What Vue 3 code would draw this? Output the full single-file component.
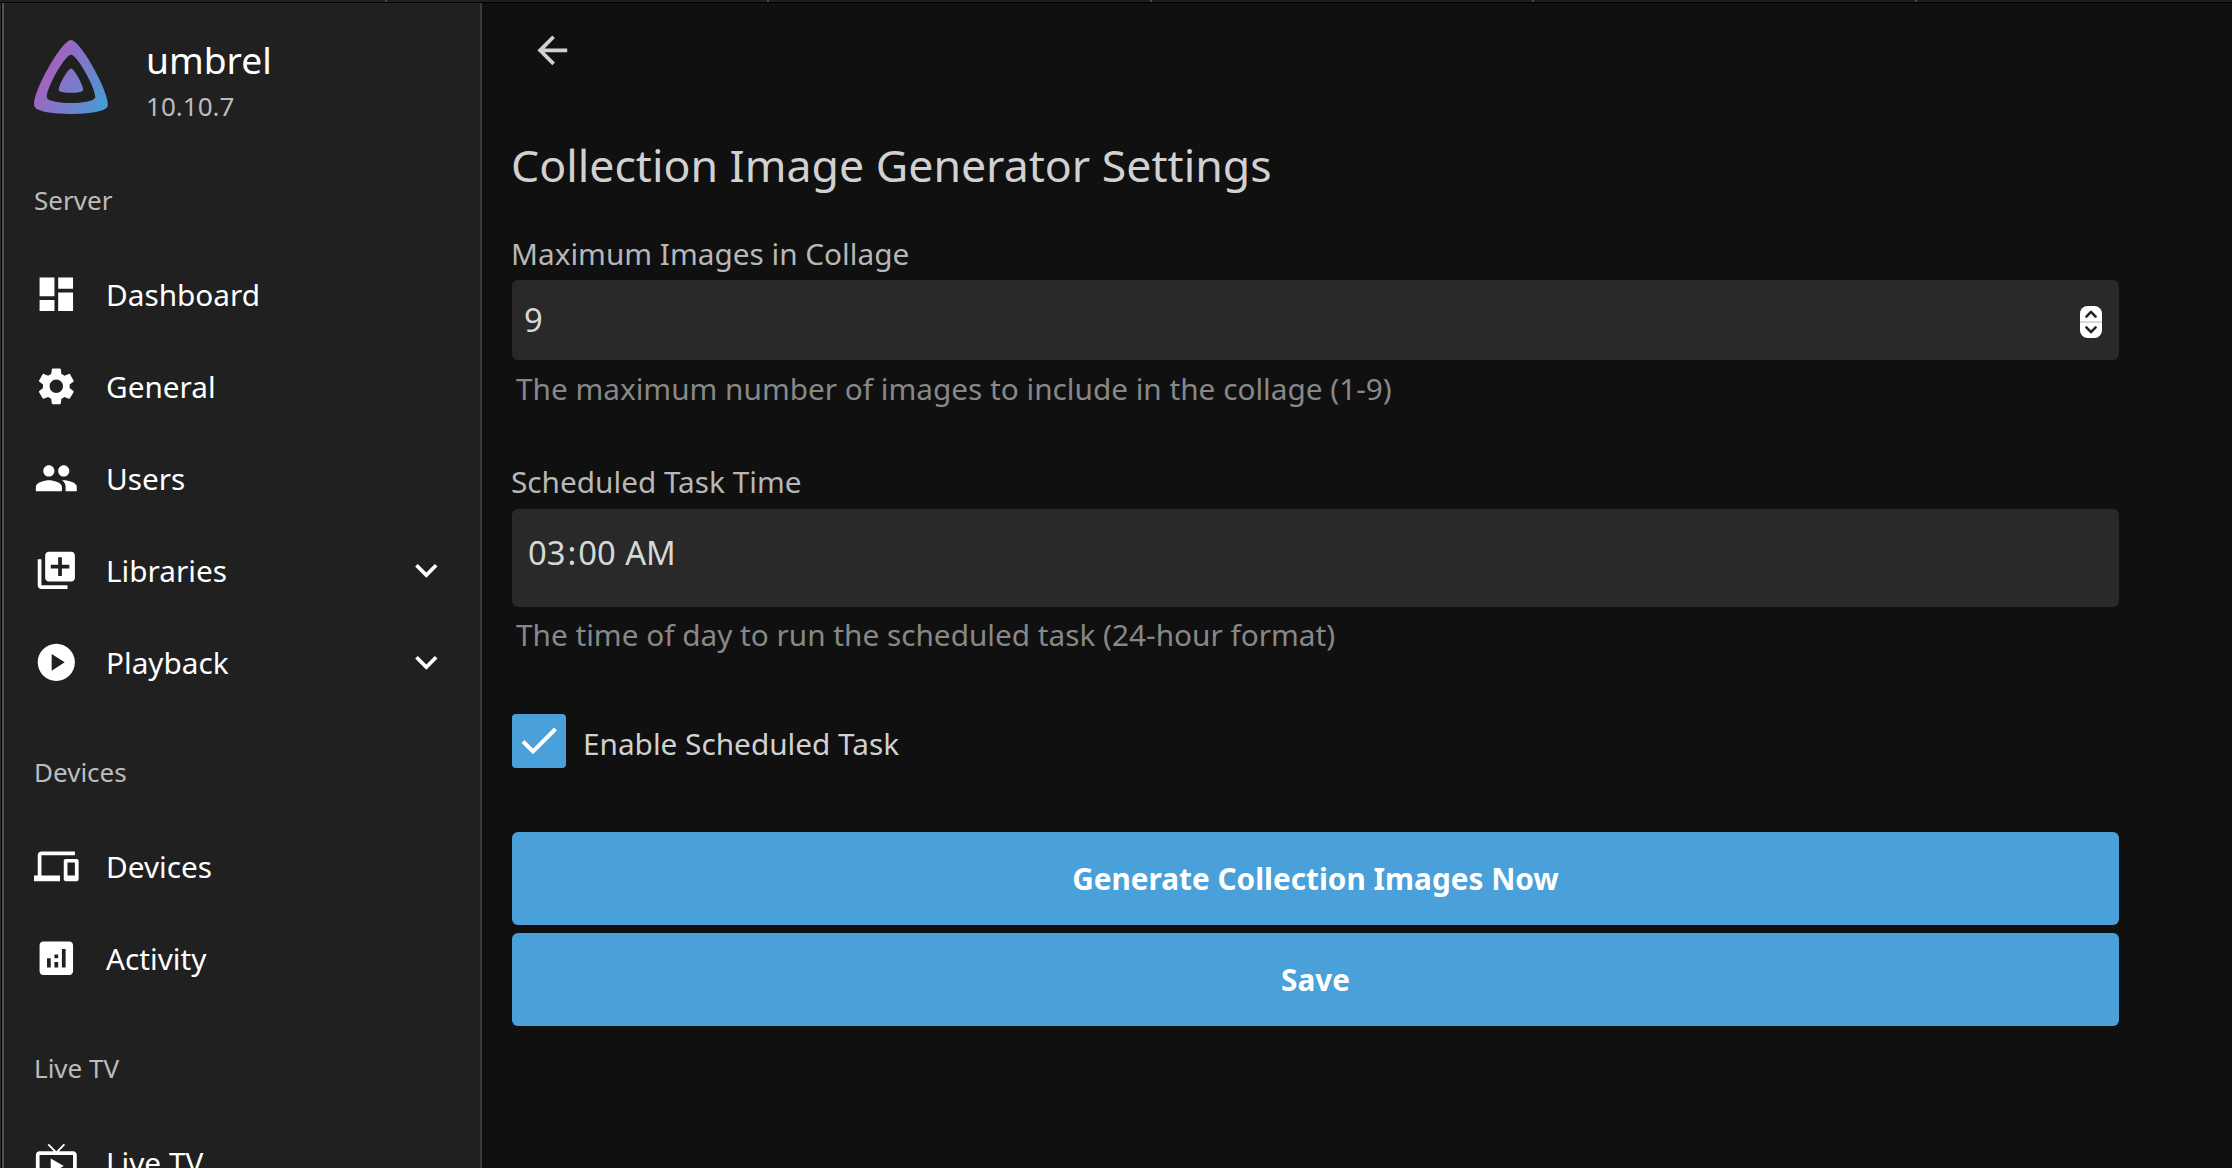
<script setup>
const icons = {
  dashboard: 'M3 13h8V3H3v10zm0 8h8v-6H3v6zm10 0h8V11h-8v10zm0-18v6h8V3h-8z',
  settings:
    'M19.14 12.94c.04-.3.06-.61.06-.94 0-.32-.02-.64-.07-.94l2.03-1.58c.18-.14.23-.41.12-.61l-1.92-3.32c-.12-.22-.37-.29-.59-.22l-2.39.96c-.5-.38-1.03-.7-1.62-.94l-.36-2.54c-.04-.24-.24-.41-.48-.41h-3.84c-.24 0-.43.17-.47.41l-.36 2.54c-.59.24-1.13.57-1.62.94l-2.39-.96c-.22-.08-.47 0-.59.22L2.74 8.87c-.12.21-.08.47.12.61l2.03 1.58c-.05.3-.09.63-.09.94s.02.64.07.94l-2.03 1.58c-.18.14-.23.41-.12.61l1.92 3.32c.12.22.37.29.59.22l2.39-.96c.5.38 1.03.7 1.62.94l.36 2.54c.05.24.24.41.48.41h3.84c.24 0 .44-.17.47-.41l.36-2.54c.59-.24 1.13-.56 1.62-.94l2.39.96c.22.08.47 0 .59-.22l1.92-3.32c.12-.22.07-.47-.12-.61l-2.01-1.58zM12 15.6c-1.98 0-3.6-1.62-3.6-3.6s1.62-3.6 3.6-3.6 3.6 1.62 3.6 3.6-1.62 3.6-3.6 3.6z',
  people:
    'M16 11c1.66 0 2.99-1.34 2.99-3S17.66 5 16 5s-3 1.34-3 3 1.34 3 3 3zm-8 0c1.66 0 2.99-1.34 2.99-3S9.66 5 8 5 5 6.34 5 8s1.34 3 3 3zm0 2c-2.33 0-7 1.17-7 3.5V19h14v-2.5c0-2.33-4.67-3.5-7-3.5zm8 0c-.29 0-.62.02-.97.05 1.16.84 1.97 1.97 1.97 3.45V19h6v-2.5c0-2.33-4.67-3.5-7-3.5z',
  library:
    'M4 6H2v14c0 1.1.9 2 2 2h14v-2H4V6zm16-4H8c-1.1 0-2 .9-2 2v12c0 1.1.9 2 2 2h12c1.1 0 2-.9 2-2V4c0-1.1-.9-2-2-2zm-1 9h-4v4h-2v-4H9V9h4V5h2v4h4v2z',
  play: 'M12 2C6.48 2 2 6.48 2 12s4.48 10 10 10 10-4.48 10-10S17.52 2 12 2zM9.5 16.5v-9l7 4.5z',
  devices:
    'M4 6h18V4H4c-1.1 0-2 .9-2 2v11H0v3h14v-3H4V6zm19 2h-6c-.55 0-1 .45-1 1v10c0 .55.45 1 1 1h6c.55 0 1-.45 1-1V9c0-.55-.45-1-1-1zm-1 9h-4v-7h4v7z',
  analytics:
    'M19 3H5c-1.1 0-2 .9-2 2v14c0 1.1.9 2 2 2h14c1.1 0 2-.9 2-2V5c0-1.1-.9-2-2-2zM9 17H7v-5h2v5zm4 0h-2v-3h2v3zm0-5h-2v-2h2v2zm4 5h-2V7h2v10z',
  liveTv:
    'M21 6h-7.59l3.29-3.29L16 2l-4 4-4-4-.7.71L10.59 6H3c-1.1 0-2 .89-2 2v12c0 1.1.9 2 2 2h18c1.1 0 2-.9 2-2V8c0-1.11-.9-2-2-2zm0 14H3V8h18v12zM9 10v8l7-4z',
  expand: 'M16.59 8.59 12 13.17 7.41 8.59 6 10l6 6 6-6z',
  back: 'M20 11H7.83l5.59-5.59L12 4l-8 8 8 8 1.41-1.41L7.83 13H20v-2z',
}

const sections = [
  {
    title: 'Server',
    items: [
      { label: 'Dashboard', icon: icons.dashboard },
      { label: 'General', icon: icons.settings },
      { label: 'Users', icon: icons.people },
      { label: 'Libraries', icon: icons.library, expandable: true },
      { label: 'Playback', icon: icons.play, expandable: true },
    ],
  },
  {
    title: 'Devices',
    items: [
      { label: 'Devices', icon: icons.devices },
      { label: 'Activity', icon: icons.analytics },
    ],
  },
  { title: 'Live TV', items: [{ label: 'Live TV', icon: icons.liveTv }] },
]
</script>

<template>
  <div class="window">
    <div class="tabstrip"><i v-for="n in 5" :key="n" class="tab"></i></div>
    <div class="body">
      <aside class="sidebar">
        <header class="brand">
          <svg class="logo" viewBox="55.5 55.5 401 401">
            <defs>
              <linearGradient id="brand-gradient" gradientUnits="userSpaceOnUse" x1="110.25" y1="213.3" x2="496.14" y2="436.09">
                <stop offset="0" stop-color="#a85fbe" />
                <stop offset="1" stop-color="#36a5dc" />
              </linearGradient>
            </defs>
            <g fill="url(#brand-gradient)">
              <path d="M190.56 329.07c8.63 17.3 122.4 17.12 130.93 0 8.52-17.1-47.9-119.78-65.46-119.8-17.57 0-74.1 102.5-65.47 119.8z" />
              <path d="M58.75 417.03c25.97 52.15 368.86 51.55 394.55 0S308.93 56.08 256.03 56.08c-52.92 0-223.25 308.8-197.28 360.95zm68.04-45.25c-17.02-34.17 94.6-236.5 129.26-236.5 34.67 0 146.1 202.7 129.26 236.5-16.83 33.8-241.5 34.17-258.52 0z" />
            </g>
          </svg>
          <div>
            <div class="server-name">umbrel</div>
            <div class="version">10.10.7</div>
          </div>
        </header>
        <nav v-for="section in sections" :key="section.title" class="section">
          <div class="section-title">{{ section.title }}</div>
          <a v-for="item in section.items" :key="item.label" class="item">
            <svg class="icon" viewBox="0 0 24 24"><path :d="item.icon" /></svg>
            <span class="item-label">{{ item.label }}</span>
            <svg v-if="item.expandable" class="icon" viewBox="0 0 24 24"><path :d="icons.expand" /></svg>
          </a>
        </nav>
      </aside>

      <main class="content">
        <svg class="back" viewBox="0 0 24 24"><path :d="icons.back" /></svg>
        <h2 class="title">Collection Image Generator Settings</h2>

        <div class="label">Maximum Images in Collage</div>
        <div class="field number">
          <span>9</span>
          <svg class="spinner" viewBox="0 0 22 32">
            <rect width="22" height="32" rx="7.5" fill="#fff" />
            <rect y="15" width="22" height="2" fill="#d8d8d8" />
            <path d="M6.4 10.6 11 5.8l4.6 4.8M6.4 21.4 11 26.2l4.6-4.8" fill="none" stroke="#262626" stroke-width="2.6" stroke-linecap="round" stroke-linejoin="round" />
          </svg>
        </div>
        <div class="description">The maximum number of images to include in the collage (1-9)</div>

        <div class="label second">Scheduled Task Time</div>
        <div class="field time">
          <span>03<span class="colon">:</span>00 <span class="meridiem">AM</span></span>
        </div>
        <div class="description">The time of day to run the scheduled task (24-hour format)</div>

        <label class="check-row">
          <span class="checkbox">
            <svg viewBox="0 0 54 54"><path d="M11 27.5 21 37.5 43.5 15" /></svg>
          </span>
          <span class="check-label">Enable Scheduled Task</span>
        </label>

        <button class="button">Generate Collection Images Now</button>
        <button class="button">Save</button>
      </main>
    </div>
  </div>
</template>

<style>
body {
  background: #101010;
}
</style>

<style scoped>
.window {
  width: 2232px;
  height: 1168px;
  overflow: hidden;
  display: flex;
  flex-direction: column;
  background: #101010;
  color: #fff;
  font-family: "Noto Sans", sans-serif;
  font-size: 29.76px;
}
.tabstrip {
  flex: none;
  display: flex;
  height: 2px;
  padding-left: 4px;
  background: #1f1f1f;
  border-bottom: 1px solid #000;
}
.tab {
  box-sizing: border-box;
  flex: none;
  width: 382.5px;
  border-right: 2px solid #4a4a4a;
}
.body {
  flex: 1;
  min-height: 0;
  display: flex;
  border-left: 1px solid #2c2c2c;
}
.body::before {
  content: "";
  flex: none;
  width: 1px;
  background: #000;
}
.sidebar {
  box-sizing: border-box;
  flex: none;
  width: 480px;
  overflow: hidden;
  background: #202020;
  border-left: 2px solid #505050;
  border-right: 2px solid #3a3a3a;
}
.brand {
  box-sizing: border-box;
  display: flex;
  gap: 38px;
  height: 133px;
  padding: 37px 0 0 30px;
}
.logo {
  width: 74px;
  height: 74px;
}
.server-name {
  margin-top: -6px;
  font-size: 37.2px;
  line-height: 51px;
}
.version {
  margin-top: 3px;
  font-size: 26.04px;
  line-height: 36px;
  color: #bcbcbc;
}
.section {
  padding-top: 16px;
}
.section-title {
  padding-left: 30px;
  font-size: 26.04px;
  line-height: 96px;
  color: #bcbcbc;
}
.item {
  display: flex;
  align-items: center;
  height: 92px;
  padding: 0 31px 0 30px;
}
.icon {
  flex: none;
  width: 44.64px;
  height: 44.64px;
  fill: #fff;
}
.item-label {
  flex: 1;
  margin-left: 27.36px;
  padding-top: 1px;
  line-height: 43px;
}
.content {
  flex: none;
  box-sizing: border-box;
  width: 1637px;
  padding: 25px 0 0 30px;
  display: flex;
  flex-direction: column;
}
.back {
  width: 44.64px;
  height: 44.64px;
  margin-left: 18px;
  fill: #d1d1d1;
}
.title {
  margin: 61.36px 0 0 -1px;
  font-size: 44.64px;
  font-weight: 400;
  line-height: 61px;
  color: #d1d1d1;
}
.label {
  height: 47px;
  margin: 38px 0 0 -1px;
  line-height: 41px;
  color: #b7b7b7;
}
.label.second {
  height: 48px;
  margin-top: 52px;
}
.field {
  box-sizing: border-box;
  display: flex;
  align-items: center;
  border-radius: 6px;
  background: #292929;
  color: #d8d8d8;
  font-size: 32.74px;
  line-height: 45px;
}
.number {
  justify-content: space-between;
  height: 80px;
  padding: 0 17px 1px 12px;
}
.spinner {
  width: 22px;
  height: 32px;
  margin-top: 5px;
}
.time {
  height: 98px;
  padding: 0 16px 11px;
}
.colon {
  margin: 0 2px;
}
.meridiem {
  margin-left: 1px;
}
.description {
  margin: 8px 0 0 4px;
  line-height: 41px;
  color: #888;
}
.time + .description {
  margin-top: 7px;
}
.check-row {
  display: flex;
  align-items: center;
  margin-top: 59px;
}
.checkbox {
  width: 54px;
  height: 54px;
  border-radius: 4px;
  background: #4aa0d8;
}
.checkbox svg {
  display: block;
  fill: none;
  stroke: #fff;
  stroke-width: 4;
}
.check-label {
  margin: 5px 0 0 17px;
  line-height: 41px;
  color: #d1d1d1;
}
.button {
  height: 93px;
  margin: 64px 0 0;
  padding: 0;
  border: 0;
  border-radius: 6px;
  background: #4aa0d8;
  color: #fff;
  font: 700 29.76px/41px "Noto Sans", sans-serif;
}
.button + .button {
  margin-top: 8px;
}
</style>
